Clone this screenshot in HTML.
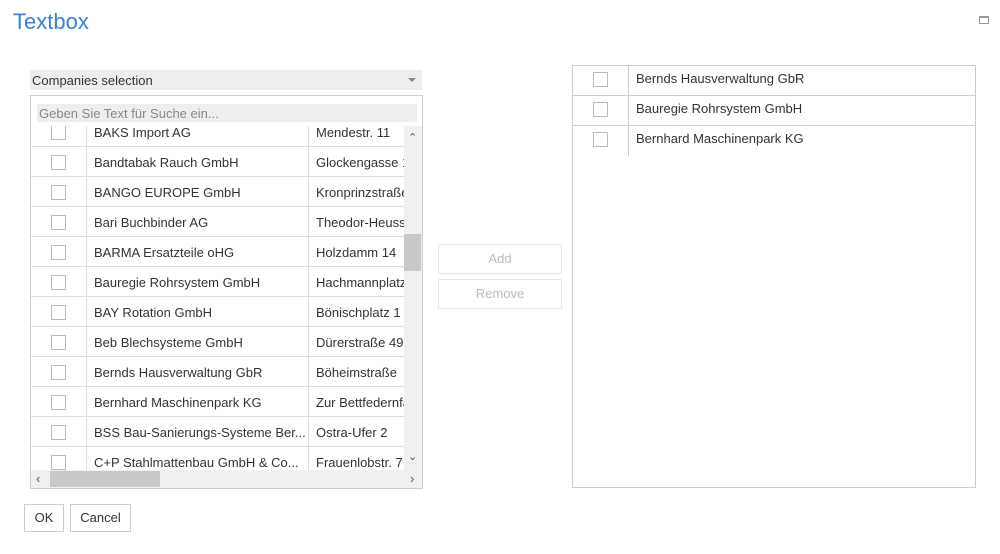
<!DOCTYPE html>
<html><head><meta charset="utf-8"><style>
*{box-sizing:border-box;margin:0;padding:0}
body{width:1000px;height:554px;background:#fff;font-family:"Liberation Sans",sans-serif;font-size:13px;color:#333;position:relative;overflow:hidden}
.a{position:absolute}
.cb{position:absolute;width:15px;height:15px;border:1px solid #bbb;background:#fff}
.row{position:absolute;left:0;height:30px;border-bottom:1px solid #ddd;width:374px}
.row span{position:absolute;top:8px;white-space:nowrap;overflow:hidden}
.btn{position:absolute;border:1px solid #ccc;background:#fff;text-align:center;font-size:13px}
</style></head><body>
<div class="a" style="left:13px;top:9px;font-size:22px;color:#3b82d0">Textbox</div>
<div class="a" style="left:979px;top:16px;width:10px;height:8px;border:1px solid #999;border-top-width:2px"></div>

<div class="a" style="left:30px;top:70px;width:392px;height:20px;background:#eee"></div>
<div class="a" style="left:32px;top:73px">Companies selection</div>
<div class="a" style="left:408px;top:78px;width:0;height:0;border-left:4px solid transparent;border-right:4px solid transparent;border-top:4px solid #888"></div>

<div class="a" style="left:30px;top:95px;width:393px;height:394px;border:1px solid #ccc"></div>
<div class="a" style="left:37px;top:104px;width:380px;height:18px;background:#eee;color:#888;padding:2px 0 0 2px">Geben Sie Text für Suche ein...</div>

<div class="a" style="left:31px;top:126px;width:373px;height:344px;overflow:hidden">
<div class="a" style="left:0;top:-9px;width:374px;height:390px">
<div class="row" style="top:0"><div class="cb" style="left:20px;top:8px"></div><span style="left:63px">BAKS Import AG</span><span style="left:285px">Mendestr. 11</span></div>
<div class="row" style="top:30px"><div class="cb" style="left:20px;top:8px"></div><span style="left:63px">Bandtabak Rauch GmbH</span><span style="left:285px;width:88px">Glockengasse 1</span></div>
<div class="row" style="top:60px"><div class="cb" style="left:20px;top:8px"></div><span style="left:63px">BANGO EUROPE GmbH</span><span style="left:285px;width:88px">Kronprinzstraße</span></div>
<div class="row" style="top:90px"><div class="cb" style="left:20px;top:8px"></div><span style="left:63px">Bari Buchbinder AG</span><span style="left:285px;width:88px">Theodor-Heuss</span></div>
<div class="row" style="top:120px"><div class="cb" style="left:20px;top:8px"></div><span style="left:63px">BARMA Ersatzteile oHG</span><span style="left:285px">Holzdamm 14</span></div>
<div class="row" style="top:150px"><div class="cb" style="left:20px;top:8px"></div><span style="left:63px">Bauregie Rohrsystem GmbH</span><span style="left:285px;width:88px">Hachmannplatz</span></div>
<div class="row" style="top:180px"><div class="cb" style="left:20px;top:8px"></div><span style="left:63px">BAY Rotation GmbH</span><span style="left:285px;width:88px">Bönischplatz 1</span></div>
<div class="row" style="top:210px"><div class="cb" style="left:20px;top:8px"></div><span style="left:63px">Beb Blechsysteme GmbH</span><span style="left:285px;width:88px">Dürerstraße 49</span></div>
<div class="row" style="top:240px"><div class="cb" style="left:20px;top:8px"></div><span style="left:63px">Bernds Hausverwaltung GbR</span><span style="left:285px">Böheimstraße</span></div>
<div class="row" style="top:270px"><div class="cb" style="left:20px;top:8px"></div><span style="left:63px">Bernhard Maschinenpark KG</span><span style="left:285px;width:88px">Zur Bettfedernfabrik</span></div>
<div class="row" style="top:300px"><div class="cb" style="left:20px;top:8px"></div><span style="left:63px">BSS Bau-Sanierungs-Systeme Ber...</span><span style="left:285px">Ostra-Ufer 2</span></div>
<div class="row" style="top:330px"><div class="cb" style="left:20px;top:8px"></div><span style="left:63px">C+P Stahlmattenbau GmbH &amp; Co...</span><span style="left:285px">Frauenlobstr. 7</span></div>
<div class="a" style="left:55px;top:0;width:1px;height:390px;background:#ddd"></div>
<div class="a" style="left:277px;top:0;width:1px;height:390px;background:#ddd"></div>
</div></div>
<div class="a" style="left:404px;top:126px;width:18px;height:344px;background:#f0f0f0"></div>
<div class="a" style="left:404px;top:234px;width:17px;height:37px;background:#c8c8c8"></div>
<div class="a" style="left:408px;top:131px;font-size:11px;color:#555">&#8963;</div>
<div class="a" style="left:408px;top:450px;font-size:11px;color:#555">&#8964;</div>
<div class="a" style="left:31px;top:470px;width:391px;height:18px;background:#f0f0f0"></div>
<div class="a" style="left:50px;top:471px;width:110px;height:16px;background:#c8c8c8"></div>
<div class="a" style="left:36px;top:471px;font-size:13px;color:#555">&lsaquo;</div>
<div class="a" style="left:410px;top:471px;font-size:13px;color:#555">&rsaquo;</div>

<div class="btn" style="left:438px;top:244px;width:124px;height:30px;line-height:28px;color:#bbb;border-color:#e6e6e6">Add</div>
<div class="btn" style="left:438px;top:279px;width:124px;height:30px;line-height:28px;color:#bbb;border-color:#e6e6e6">Remove</div>

<div class="a" style="left:572px;top:65px;width:404px;height:423px;border:1px solid #ccc"></div>
<div class="a" style="left:573px;top:95px;width:402px;height:1px;background:#ccc"></div>
<div class="a" style="left:573px;top:125px;width:402px;height:1px;background:#ccc"></div>
<div class="a" style="left:628px;top:66px;width:1px;height:90px;background:#ccc"></div>
<div class="cb" style="left:593px;top:72px"></div>
<div class="cb" style="left:593px;top:102px"></div>
<div class="cb" style="left:593px;top:132px"></div>
<div class="a" style="left:636px;top:71px">Bernds Hausverwaltung GbR</div>
<div class="a" style="left:636px;top:101px">Bauregie Rohrsystem GmbH</div>
<div class="a" style="left:636px;top:131px">Bernhard Maschinenpark KG</div>

<div class="btn" style="left:24px;top:504px;width:40px;height:28px;line-height:26px">OK</div>
<div class="btn" style="left:70px;top:504px;width:61px;height:28px;line-height:26px">Cancel</div>
</body></html>
